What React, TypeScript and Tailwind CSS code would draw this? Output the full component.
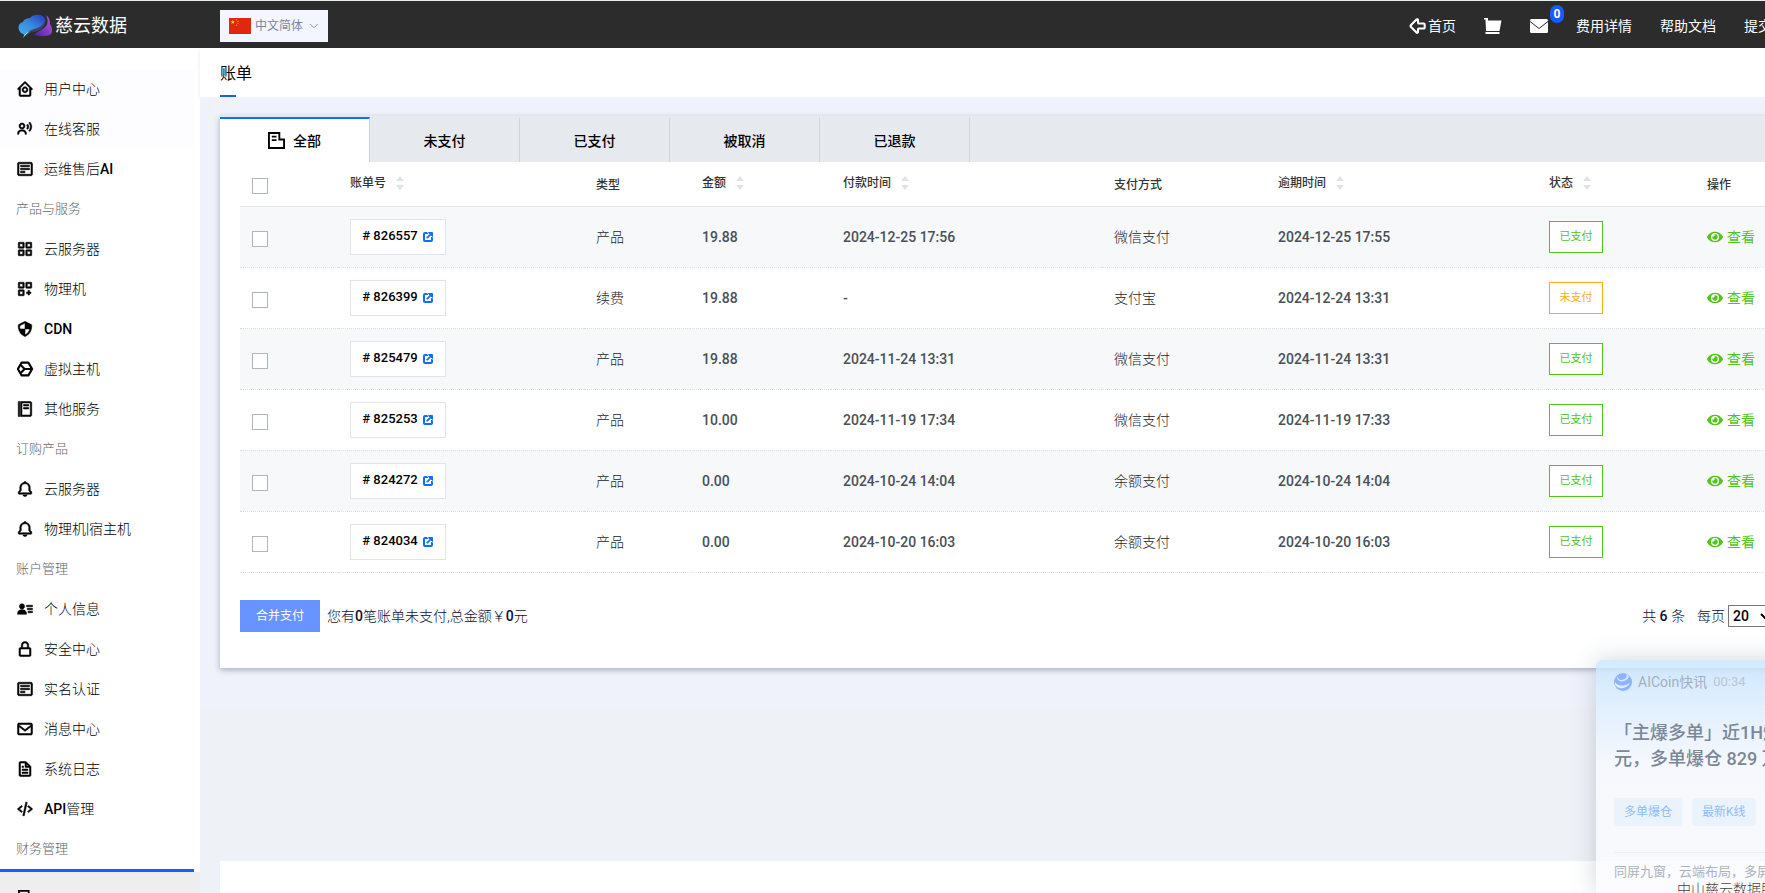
import React, { useState } from 'react';
import { ArrowBigLeft, ChevronDown } from 'lucide-react';
import {
  BiBell,
  BiCodeAlt,
  BiCustomize,
  BiDetail,
  BiEnvelope,
  BiFile,
  BiFoodMenu,
  BiGridAlt,
  BiHomeCircle,
  BiLinkExternal,
  BiLockAlt,
  BiShieldQuarter,
  BiSolidUserDetail,
  BiUserVoice
} from 'react-icons/bi';
import { FaEye } from 'react-icons/fa';

interface Bill {
  id: string;
  type: string;
  amount: string;
  paidAt: string;
  method: string;
  dueAt: string;
  paid: boolean;
}

interface MenuItem {
  label: string;
  latin?: string;
  latinFirst?: boolean;
  icon?: React.ElementType;
  tinted?: boolean;
}

const HexIcon = ({ className }: { className?: string }) => (
  <svg viewBox="0 0 24 24" className={className} fill="none" stroke="currentColor" strokeWidth="2.8" strokeLinejoin="round">
    <path d="M7.500 3.500h9l5 8.500-5 8.500h-9l-5-8.500z" />
    <path d="M21 12H11.500M11.500 12L6.500 7M11.500 12L6.500 17" />
  </svg>
);

const BillIcon = ({ className }: { className?: string }) => (
  <svg viewBox="0 0 18 18" className={className} fill="none" stroke="currentColor" strokeWidth="2">
    <path d="M1 1h11v7h5v9H1z" />
    <path d="M4 5h5M4 8.500h5" strokeWidth="1.800" />
  </svg>
);

// Entries without an icon are section titles
const menu: MenuItem[] = [
  { label: '用户中心', icon: BiHomeCircle, tinted: true },
  { label: '在线客服', icon: BiUserVoice, tinted: true },
  { label: '运维售后', latin: 'AI', icon: BiDetail },
  { label: '产品与服务' },
  { label: '云服务器', icon: BiGridAlt },
  { label: '物理机', icon: BiCustomize },
  { label: '', latin: 'CDN', icon: BiShieldQuarter },
  { label: '虚拟主机', icon: HexIcon },
  { label: '其他服务', icon: BiFoodMenu },
  { label: '订购产品' },
  { label: '云服务器', icon: BiBell },
  { label: '物理机|宿主机', icon: BiBell },
  { label: '账户管理' },
  { label: '个人信息', icon: BiSolidUserDetail },
  { label: '安全中心', icon: BiLockAlt },
  { label: '实名认证', icon: BiDetail },
  { label: '消息中心', icon: BiEnvelope },
  { label: '系统日志', icon: BiFile },
  { label: '管理', latin: 'API', latinFirst: true, icon: BiCodeAlt },
  { label: '财务管理' }
];

const tabs = ['全部', '未支付', '已支付', '被取消', '已退款'];

const bills: Bill[] = [
  { id: '826557', type: '产品', amount: '19.88', paidAt: '2024-12-25 17:56', method: '微信支付', dueAt: '2024-12-25 17:55', paid: true },
  { id: '826399', type: '续费', amount: '19.88', paidAt: '-', method: '支付宝', dueAt: '2024-12-24 13:31', paid: false },
  { id: '825479', type: '产品', amount: '19.88', paidAt: '2024-11-24 13:31', method: '微信支付', dueAt: '2024-11-24 13:31', paid: true },
  { id: '825253', type: '产品', amount: '10.00', paidAt: '2024-11-19 17:34', method: '微信支付', dueAt: '2024-11-19 17:33', paid: true },
  { id: '824272', type: '产品', amount: '0.00', paidAt: '2024-10-24 14:04', method: '余额支付', dueAt: '2024-10-24 14:04', paid: true },
  { id: '824034', type: '产品', amount: '0.00', paidAt: '2024-10-20 16:03', method: '余额支付', dueAt: '2024-10-20 16:03', paid: true }
];

const columns = [
  { label: '账单号', sortable: true },
  { label: '类型', sortable: false },
  { label: '金额', sortable: true },
  { label: '付款时间', sortable: true },
  { label: '支付方式', sortable: false },
  { label: '逾期时间', sortable: true },
  { label: '状态', sortable: true },
  { label: '操作', sortable: false }
];

function Logo() {
  return (
    <a href="#home" className="flex items-center gap-[3px] text-white">
      <svg viewBox="0 0 34 24" className="h-6 w-[34px]">
        <defs>
          <linearGradient id="cloud" x1="0" y1="1" x2="1" y2="0">
            <stop offset="0" stopColor="#3db4ea" />
            <stop offset="0.5" stopColor="#3a86dc" />
            <stop offset="1" stopColor="#2437c4" />
          </linearGradient>
          <linearGradient id="wing" x1="0" y1="1" x2="1" y2="0">
            <stop offset="0" stopColor="#4a1fa8" />
            <stop offset="1" stopColor="#c05ae0" />
          </linearGradient>
        </defs>
        <path d="M16 21c3-4 9-5 12-9 2-3 2-7 0-11 3 2 4 5 4 9 2 3 3 7 1 10-3 3-11 2-17 1z" fill="url(#wing)" />
        <path d="M3 19C-1 15 0 9 5 8c1-3 4-4 7-4 3-4 11-4 14-1 3 4 1 8-4 11-5 2-11 2-15 7l-2-1z" fill="url(#cloud)" />
        <path d="M5 24c3-7 8-8 14-10 4-1 7-4 8-8 1 6-3 9-8 11-5 1-9 2-14 7z" fill="#3a4560" />
        <path d="M5 24c1-4 4-6 7-7-2 2-5 4-7 7z" fill="#9fe0f0" />
      </svg>
      <span className="text-lg">慈云数据</span>
    </a>
  );
}

function Flag() {
  return (
    <svg viewBox="0 0 22 16" className="h-4 w-[22px]">
      <rect width="22" height="16" fill="#de2910" />
      <path d="M3.800 2l.6 1.500h1.600l-1.300 1 .5 1.600-1.400-1-1.400 1 .5-1.600-1.300-1h1.600z" fill="#ffde00" />
      <g fill="#ff9a00">
        <circle cx="7.500" cy="1.800" r=".7" />
        <circle cx="9" cy="3.400" r=".7" />
        <circle cx="9" cy="5.600" r=".7" />
        <circle cx="7.500" cy="7.200" r=".7" />
      </g>
    </svg>
  );
}

function TopBar() {
  return (
    <header className="flex h-12 shrink-0 items-center border-t border-[#e8efec] bg-[#2c2c2c] pt-0.5 text-sm text-white">
      <div className="w-[220px] shrink-0 pl-[18px]">
        <Logo />
      </div>
      <button type="button" className="flex h-8 w-[108px] items-center gap-1 bg-[#f3f5ff] pl-[9px] text-xs text-[#7d84a0]">
        <Flag />
        <span>中文简体</span>
        <ChevronDown className="h-[14px] w-[14px]" strokeWidth={1.500} />
      </button>
      <nav className="ml-auto flex items-center pr-[100px]">
        <a href="#index" className="flex items-center">
          <ArrowBigLeft className="h-5 w-5" strokeWidth={2.500} />
          首页
        </a>
        <a href="#cart" aria-label="购物车" className="ml-7">
          <svg viewBox="0 0 18 18" className="h-[18px] w-[18px]" fill="currentColor">
            <path d="M0 1h4v2.500h13.500l-2 10.500H2L1.500 2.500H0z" />
            <path d="M1.500 15h14v2h-14z" />
          </svg>
        </a>
        <a href="#message" aria-label="消息" className="relative ml-7">
          <svg viewBox="0 0 18 14" className="h-[14px] w-[18px]">
            <rect width="18" height="14" rx="1.500" fill="#fff" />
            <path d="M0 2.500l9 7 9-7" fill="none" stroke="#2c2c2c" strokeWidth="1" />
          </svg>
          <span className="absolute -top-[14px] left-5 flex h-[18px] w-[14px] items-center justify-center rounded-full bg-[#155dff] text-xs font-bold">0</span>
        </a>
        <a href="#fee" className="ml-7">费用详情</a>
        <a href="#docs" className="ml-7">帮助文档</a>
        <a href="#ticket" className="ml-7">提交工单</a>
      </nav>
    </header>
  );
}

function Sidebar() {
  return (
    <aside className="flex w-[200px] shrink-0 flex-col bg-white pt-[21px]">
      <ul className="shrink-0 font-light">
        {menu.map((item, index) => {
          const Icon = item.icon;
          if (!Icon) {
            return (
              <li key={index} className="flex h-10 items-center px-4 text-[13px] text-[#666]">
                {item.label}
              </li>
            );
          }
          return (
            <li key={index} className={item.tinted ? 'mr-[6px] bg-[#fdfdff]' : ''}>
              <a href={`#menu-${index}`} className="flex h-10 items-center gap-[10px] pl-4 text-sm text-black">
                <Icon className="h-[18px] w-[18px] shrink-0" stroke="currentColor" strokeWidth={0.700} />
                <span>
                  {item.latinFirst && <span className="font-medium">{item.latin}</span>}
                  {item.label}
                  {!item.latinFirst && item.latin && <span className="font-medium">{item.latin}</span>}
                </span>
              </a>
            </li>
          );
        })}
      </ul>
      <div className="mr-[6px] h-[3px] shrink-0 bg-[#155dff]" />
      <div className="flex-1 bg-[#eeeeee] pt-[18px] pl-[18px]">
        <BillIcon className="h-4 w-4" />
      </div>
    </aside>
  );
}

function SortArrows() {
  return (
    <svg viewBox="0 0 8 14" className="h-[14px] w-2" fill="#dfe2e6">
      <path d="M4 0l4 5H0zM4 14l4-5H0z" />
    </svg>
  );
}

const checkboxClass = 'mt-1 block h-4 w-4 appearance-none border border-[#adb5bd] bg-white checked:bg-[#155dff]';

function BillTable() {
  const [selected, setSelected] = useState<string[]>([]);

  const toggle = (id: string) => {
    setSelected(selected.includes(id) ? selected.filter((s) => s !== id) : [...selected, id]);
  };

  const toggleAll = () => {
    setSelected(selected.length === bills.length ? [] : bills.map((b) => b.id));
  };

  return (
    <table className="w-full table-fixed border-collapse text-left text-sm text-[#495057]">
      <colgroup>
        <col className="w-[98px]" />
        <col className="w-[246px]" />
        <col className="w-[106px]" />
        <col className="w-[141px]" />
        <col className="w-[271px]" />
        <col className="w-[164px]" />
        <col className="w-[271px]" />
        <col className="w-[158px]" />
        <col />
      </colgroup>
      <thead>
        <tr className="h-11 border-b border-[#e1e4ef] text-xs text-[#333]">
          <th className="px-3">
            <input
              type="checkbox"
              aria-label="全选"
              className={checkboxClass}
              checked={selected.length === bills.length}
              onChange={toggleAll}
            />
          </th>
          {columns.map((col) => (
            <th key={col.label} className="px-3 pt-0.5 font-medium">
              {col.sortable ? (
                <button type="button" className="mb-1 flex items-center gap-[10px]">
                  {col.label}
                  <SortArrows />
                </button>
              ) : (
                col.label
              )}
            </th>
          ))}
        </tr>
      </thead>
      <tbody>
        {bills.map((bill) => (
          <tr key={bill.id} className="h-[61px] border-b border-dotted border-[#dcdfe8] odd:bg-[#f6f8fa]">
            <td className="px-3">
              <input
                type="checkbox"
                aria-label={`选择账单 ${bill.id}`}
                className={checkboxClass}
                checked={selected.includes(bill.id)}
                onChange={() => toggle(bill.id)}
              />
            </td>
            <td className="px-3">
              <a
                href={`#bill-${bill.id}`}
                className="flex h-9 w-24 items-center justify-center gap-1 border border-[#e1e4f0] bg-white text-[13px] font-medium text-black"
              >
                # {bill.id}
                <BiLinkExternal className="h-3 w-3 text-[#0d6efd]" stroke="currentColor" strokeWidth={2} />
              </a>
            </td>
            <td className="px-3 font-light text-[#212529]">{bill.type}</td>
            <td className="px-3 font-medium">{bill.amount}</td>
            <td className="px-3 font-medium">{bill.paidAt}</td>
            <td className="px-3 font-light text-[#212529]">{bill.method}</td>
            <td className="px-3 font-medium">{bill.dueAt}</td>
            <td className="px-3">
              <span
                className={
                  bill.paid
                    ? 'flex h-8 w-[54px] items-center justify-center border border-[#52c41a] bg-white text-[11px] text-[#52c41a]'
                    : 'flex h-8 w-[54px] items-center justify-center border border-[#faad14] bg-white text-[11px] text-[#faad14]'
                }
              >
                {bill.paid ? '已支付' : '未支付'}
              </span>
            </td>
            <td className="px-3">
              <a href={`#view-${bill.id}`} className="flex items-center gap-1 text-[#52c41a]">
                <FaEye className="h-4 w-4" />
                查看
              </a>
            </td>
          </tr>
        ))}
      </tbody>
    </table>
  );
}

function BillCard() {
  const [active, setActive] = useState('全部');

  return (
    <section className="bg-white shadow-[0_2px_6px_rgba(60,70,100,0.4)]">
      <div className="flex h-[46px] bg-[#e6e9ee] pt-px">
        {tabs.map((tab) => (
          <button
            key={tab}
            type="button"
            onClick={() => setActive(tab)}
            className={
              tab === active
                ? 'flex w-[150px] items-center justify-center gap-2 border-t-2 border-r border-t-[#0d6efd] border-r-[#d0d4da] bg-white text-sm font-medium text-black'
                : 'flex w-[150px] items-center justify-center gap-2 border-t-2 border-r border-t-transparent border-r-[#d0d4da] text-sm font-medium text-black'
            }
          >
            {tab === '全部' && <BillIcon className="h-[17px] w-[17px]" />}
            {tab}
          </button>
        ))}
      </div>
      <div className="px-5 pb-9">
        <BillTable />
        <div className="mt-[27px] flex items-center text-sm font-light text-[#0b0b33]">
          <button type="button" className="h-8 w-20 bg-[#6794ff] text-xs font-normal text-white">
            合并支付
          </button>
          <span className="ml-[7px]">
            您有<span className="font-medium">0</span>笔账单未支付,总金额￥<span className="font-medium">0</span>元
          </span>
          <span className="ml-auto">
            共 <span className="font-medium">6</span> 条
          </span>
          <label className="mr-[86px] ml-3 flex items-center gap-[3px]">
            每页
            <select className="h-[22px] w-[46px] appearance-auto border border-[#767676] bg-white font-medium text-black">
              <option>20</option>
              <option>50</option>
            </select>
          </label>
        </div>
      </div>
    </section>
  );
}

function NewsPopup() {
  return (
    <div className="absolute right-0 bottom-0 h-[233px] w-[304px] overflow-hidden rounded-t-md bg-linear-to-b from-[#c8e5ff]/80 via-[#f8fafe]/80 via-45% to-[#fbfbfd]/80 px-[18px] pt-[10px] shadow-[0_0_24px_rgba(70,90,120,0.25)]">
      <div className="flex h-6 items-center text-[#a3afbd]">
        <svg viewBox="0 0 18 18" className="h-[18px] w-[18px]">
          <circle cx="9" cy="9" r="9" fill="#8db4ff" />
          <path d="M3 3c0 5 4 7 9 4 2-1 3-3 3-4-1-1-2-1-3-2 2 3-1 6-5 6-2 0-3-2-4-4zM1 9c2 4 8 5 15 1-3 6-11 7-15 2z" fill="#dcebff" />
        </svg>
        <span className="ml-1.5 text-sm">AICoin快讯</span>
        <span className="ml-1.5 text-[13px] text-[#bcc6d2]">00:34</span>
      </div>
      <p className="mt-[26px] text-lg leading-[26px] font-medium whitespace-nowrap text-[#7b8796]">
        「主爆多单」近1H爆仓
        <br />
        元，多单爆仓 829 万
      </p>
      <div className="mt-[26px] flex gap-[10px] text-xs text-[#90bdf8]">
        <span className="flex h-7 items-center rounded-sm bg-[#eaf2fc] px-[10px]">多单爆仓</span>
        <span className="flex h-7 items-center rounded-sm bg-[#eaf2fc] px-[10px]">最新K线</span>
      </div>
      <p className="mt-[26px] border-t border-[#eceff3] pt-[11px] text-[13px] leading-4 whitespace-nowrap text-[#aab3c0]">同屏九窗，云端布局，多屏</p>
    </div>
  );
}

export default function App() {
  return (
    <div className="h-screen overflow-hidden font-['Roboto','Noto_Sans_CJK_SC',sans-serif]">
      <div className="relative flex h-full min-w-[1900px] flex-col bg-[#eef1f6]">
        <TopBar />
        <div className="flex min-h-0 flex-1">
          <Sidebar />
          <main className="flex min-w-0 flex-1 flex-col">
            <div className="h-[49px] shrink-0 bg-white px-5 shadow-[0_1px_4px_rgba(60,70,120,0.12)]">
              <h1 className="flex h-full w-8 flex-col justify-end text-base leading-6 text-black">
                账单
                <span className="mt-[9px] h-0.5 w-4 bg-[#155dff]" />
              </h1>
            </div>
            <div className="shrink-0 bg-[#eff2fb] px-5 pt-[19px] pb-10">
              <BillCard />
            </div>
            <footer className="mx-5 mt-auto h-8 shrink-0 bg-white pt-[18px] pr-[35px] text-right text-sm font-light text-[#444]">
              <span className="relative z-10">中山慈云数据服务有限公司</span>
            </footer>
          </main>
        </div>
        <NewsPopup />
      </div>
    </div>
  );
}
